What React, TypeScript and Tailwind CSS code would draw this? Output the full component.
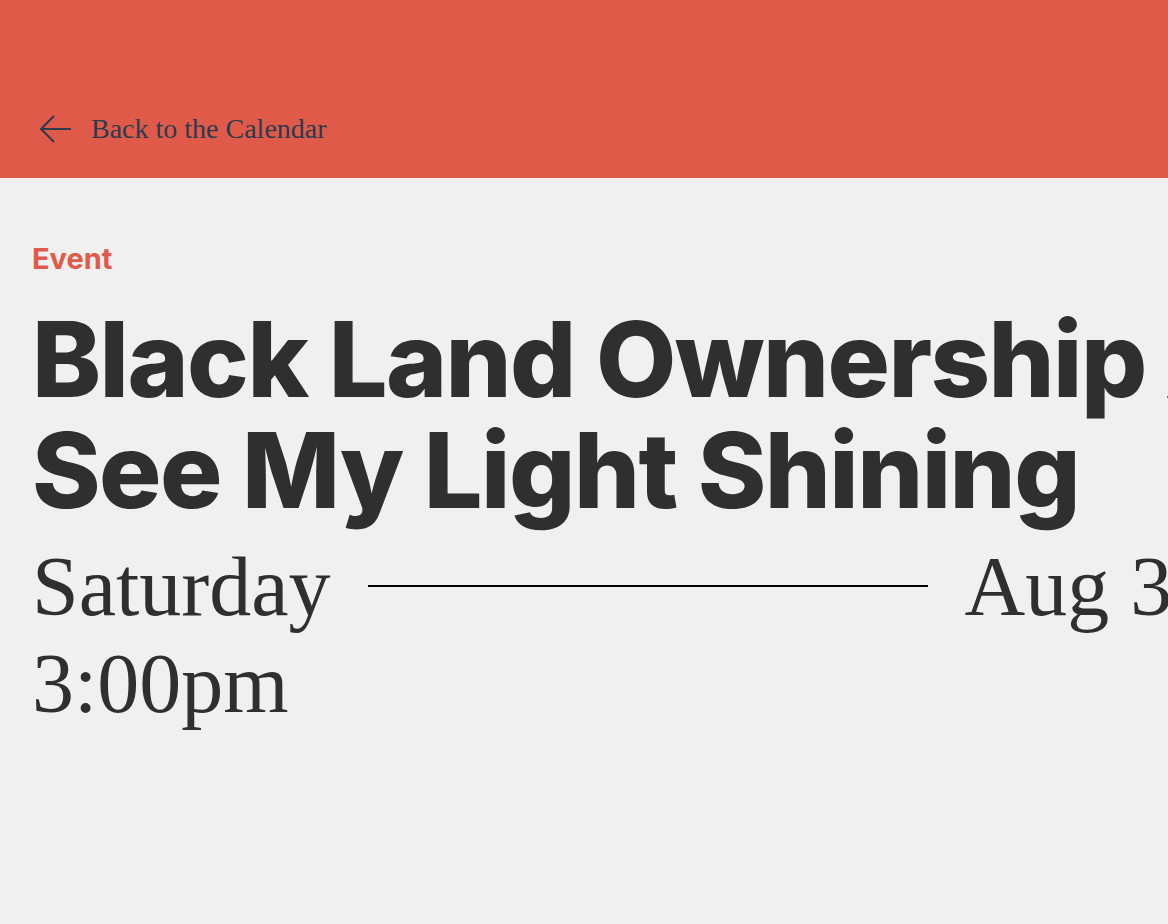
export default function App() {
  return (
    <div className="min-h-screen w-full overflow-hidden bg-[#f0f0f0] text-[#2f2f2f]">
      <header className="h-[178px] bg-[#e05a4a] px-[38px] pt-[114px]">
        <a href="#" className="flex items-center gap-[19px] text-[#2b3a4f]">
          <svg width="34" height="30" viewBox="0 0 34 30" fill="none" stroke="currentColor" strokeWidth="2">
            <path d="M33 15H3" />
            <path d="M16 2L3 15l13 13" />
          </svg>
          <span className="font-['Liberation_Serif',serif] text-[28px] leading-none">Back to the Calendar</span>
        </a>
      </header>

      <main className="px-[32px] pt-[66px]">
        <p className="font-['Inter',sans-serif] text-[29px] font-bold leading-none text-[#e05a4a]">Event</p>

        <h1 className="mt-[32px] w-[1240px] font-['Inter',sans-serif] text-[104px] font-extrabold leading-[108px] tracking-[-0.015em]">
          Black Land Ownership <span className="font-['Liberation_Serif',serif] font-normal">/</span> See My Light Shining
        </h1>

        <div className="mt-[14px] flex w-[1300px] items-start font-['Liberation_Serif',serif] text-[84px] font-light leading-[97px]">
          <div>
            <div>Saturday</div>
            <div>3:00pm</div>
          </div>
          <div className="ml-[37px] mr-[37px] mt-[47px] h-[2px] w-[560px] bg-black" />
          <div>Aug 31</div>
        </div>
      </main>
    </div>
  );
}
